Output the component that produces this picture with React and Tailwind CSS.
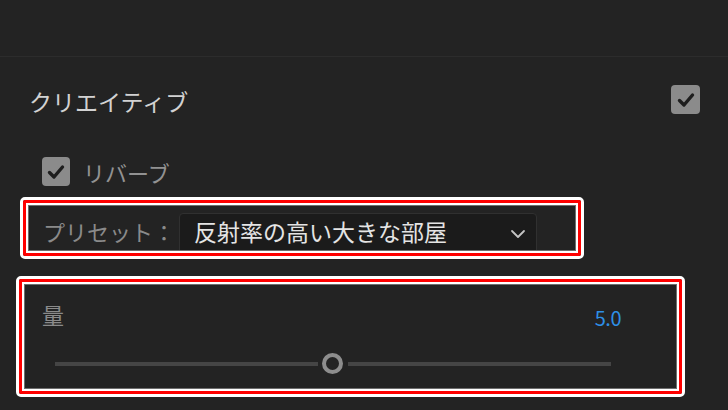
const CheckBox = ({ size }) => (
  <div
    className={`flex items-center justify-center rounded-[4px] bg-[#8b8b8b] ${size === 'lg' ? 'w-[29px] h-[29px]' : 'w-[28px] h-[29px]'}`}
  >
    <svg width="20" height="20" viewBox="0 0 20 20" fill="none">
      <path d="M3.5 10.5 L8 15 L16.5 5" stroke="#1e1e1e" strokeWidth="3.4" strokeLinecap="round" strokeLinejoin="round" />
    </svg>
  </div>
);

// red callout frame: white / red / white / grey rings
const Callout = ({ className, children }) => (
  <div className={`rounded-[5px] border-[3px] border-white ${className}`}>
    <div className="h-full border-[3px] border-[#ff0000] rounded-[2px]">
      <div className="h-full border-2 border-white">
        <div className="h-full border border-[#6e6e6e] bg-[#232323] overflow-hidden">
          {children}
        </div>
      </div>
    </div>
  </div>
);

export default function App() {
  return (
    <div className="w-[728px] h-[410px] bg-[#232323] overflow-hidden font-['Noto_Sans_CJK_JP','Noto_Sans',sans-serif]">
      <div className="h-[57px] border-b border-[#2c2c2c]" />

      <div className="mt-[28px] pl-[29px] pr-[28px] h-[29px] flex items-center justify-between">
        <span className="text-[23px] leading-[23px] text-[#d2d2d2] mt-[4px]">クリエイティブ</span>
        <CheckBox size="lg" />
      </div>

      <div className="mt-[43px] pl-[42px] flex items-center gap-[13px] h-[29px]">
        <CheckBox />
        <span className="text-[22px] leading-[22px] text-[#929292]">リバーブ</span>
      </div>

      <Callout className="mt-[11px] ml-[20px] w-[564px] h-[62px]">
        <div className="flex items-start pl-[14px] pt-[7px]">
          <span className="h-[36px] flex items-center text-[22px] text-[#8a8a8a] w-[136px]">プリセット：</span>
          <div className="w-[358px] h-[40px] rounded-t-[4px] border border-[#303030] bg-[#1b1b1b] flex items-start pt-[5px] justify-between pl-[14px] pr-[10px]">
            <span className="text-[23px] leading-[25px] text-[#e4e4e4]">反射率の高い大きな部屋</span>
            <svg width="16" height="10" viewBox="0 0 16 10" fill="none" className="mt-[10px]">
              <path d="M2 2 L8 8 L14 2" stroke="#c4c4c4" strokeWidth="1.8" strokeLinecap="round" strokeLinejoin="round" />
            </svg>
          </div>
        </div>
      </Callout>

      <Callout className="mt-[17px] ml-[16px] w-[669px] h-[121px]">
        <div className="flex items-start justify-between pl-[17px] pr-[55px] pt-[18px]">
          <span className="text-[22px] leading-[22px] text-[#8a8a8a]">量</span>
          <span className="text-[20px] leading-[22px] text-[#2e8fe6] mt-[4px] tracking-[-0.5px]">5.0</span>
        </div>
        <div className="mt-[24px] pl-[30px] flex items-center">
          <div className="w-[263px] h-[4px] bg-[#454545]" />
          <div className="ml-[4px] w-[21px] h-[21px] rounded-full border-[4px] border-[#8d8d8d] bg-[#232323]" />
          <div className="ml-[5px] w-[263px] h-[4px] bg-[#454545]" />
        </div>
      </Callout>
    </div>
  );
}
